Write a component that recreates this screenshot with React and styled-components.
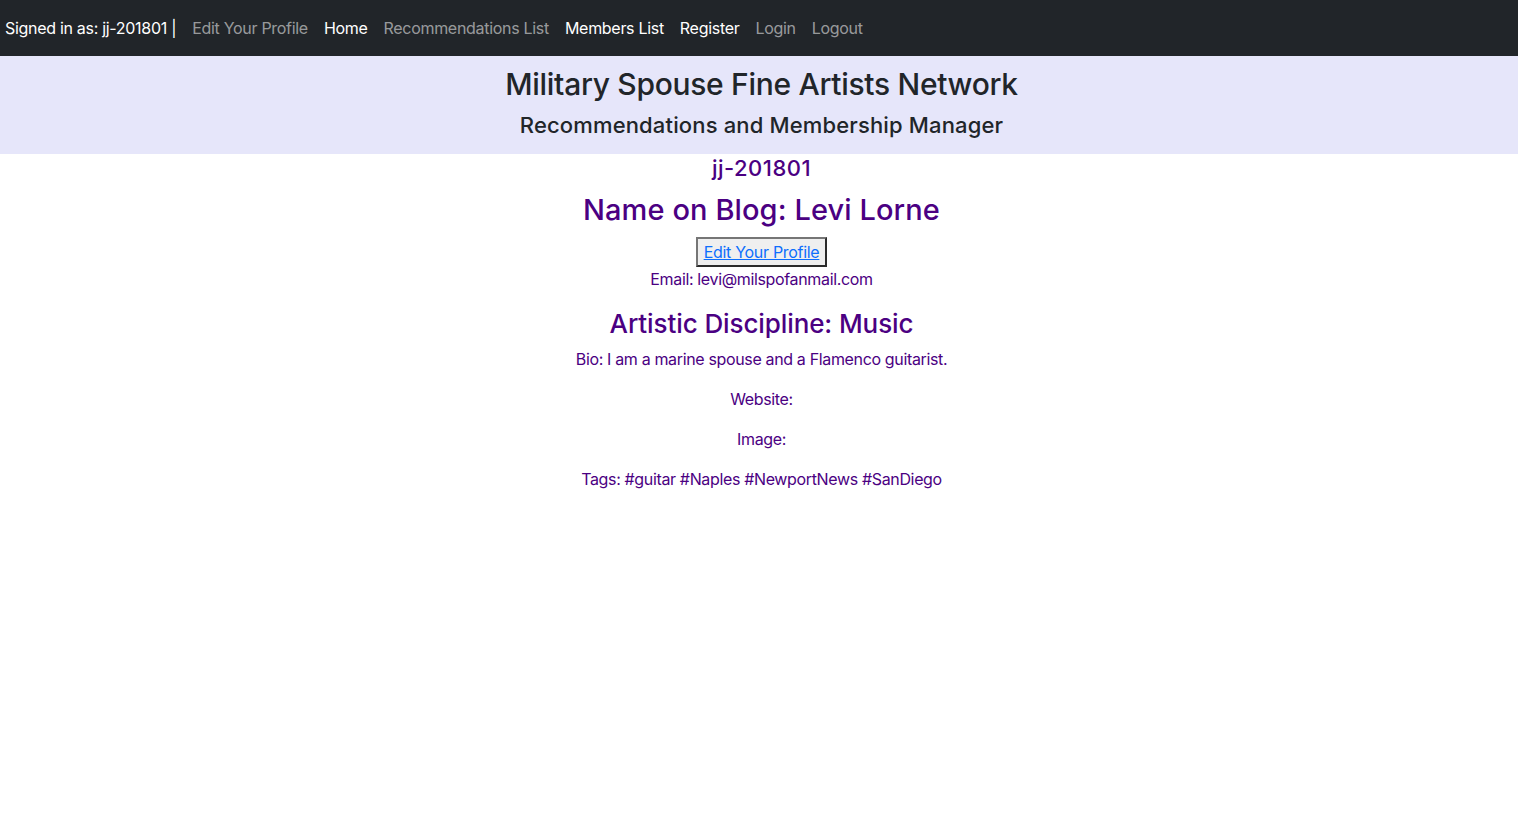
import styled, { createGlobalStyle } from "styled-components"

const Global = createGlobalStyle`
    body {
        margin: 0;
        font-family: Inter, "Noto Sans", sans-serif;
        font-size: 16px;
        line-height: 1.5;
        color: #212529;
        background: #fff;
    }
    * { box-sizing: border-box; }
`

const Nav = styled.nav`
    display: flex;
    align-items: center;
    height: 56px;
    padding: 0 5px;
    background-color: #212529;
    letter-spacing: -0.3px;
`

const SignedIn = styled.span`
    color: #fff;
    margin-right: 8px;
`

const NavLink = styled.a`
    color: ${props => props.$bright ? "#fff" : "rgba(255, 255, 255, 0.55)"};
    text-decoration: none;
    padding: 8px;
    cursor: pointer;
`

const Banner = styled.header`
    background-color: #e6e6fa;
    text-align: center;
    padding: 10px 0 16px 5px;
`

const Title = styled.h1`
    margin: 0;
    font-size: 30px;
    font-weight: 500;
    line-height: 1.2;
    letter-spacing: -0.3px;
`

const Subtitle = styled.h2`
    margin: 10px 0 0;
    font-size: 22px;
    font-weight: 500;
    line-height: 1.2;
    letter-spacing: 0.15px;
`

const Profile = styled.main`
    display: flex;
    flex-direction: column;
    align-items: center;
    text-align: center;
    padding-left: 5px;
    color: #4b0082;
    letter-spacing: -0.35px;
`

const Heading = styled.div`
    font-size: ${props => props.$size}px;
    font-weight: 500;
    line-height: 1.2;
    letter-spacing: ${props => props.$spacing || 0}px;
    margin: ${props => props.$margin};
`

const EditButton = styled.button`
    font: inherit;
    font-size: 16px;
    line-height: 20px;
    letter-spacing: -0.3px;
    padding: 3px 6px;
    background: #efefef;
    border: 2px solid;
    border-color: #767676 #2b2b2b #2b2b2b #767676;
    margin-top: 9px;

    a {
        color: #0d6efd;
        text-decoration: underline;
        cursor: pointer;
    }
`

const Line = styled.p`
    margin: 0 0 ${props => props.$after ?? 16}px;
`

function App() {
    return (
        <>
            <Global />
            <Nav>
                <SignedIn>Signed in as: jj-201801 |</SignedIn>
                <NavLink>Edit Your Profile</NavLink>
                <NavLink $bright>Home</NavLink>
                <NavLink>Recommendations List</NavLink>
                <NavLink $bright>Members List</NavLink>
                <NavLink $bright>Register</NavLink>
                <NavLink>Login</NavLink>
                <NavLink>Logout</NavLink>
            </Nav>
            <Banner>
                <Title>Military Spouse Fine Artists Network</Title>
                <Subtitle>Recommendations and Membership Manager</Subtitle>
            </Banner>
            <Profile>
                <Heading $size={22} $spacing={0.5} $margin="1px 0 0">jj-201801</Heading>
                <Heading $size={29} $spacing={0.1} $margin="11px 0 0">Name on Blog: Levi Lorne</Heading>
                <EditButton><a>Edit Your Profile</a></EditButton>
                <Line $after={0}>Email: levi@milspofanmail.com</Line>
                <Heading $size={26} $spacing={-0.1} $margin="17px 0 8px">Artistic Discipline: Music</Heading>
                <Line>Bio: I am a marine spouse and a Flamenco guitarist.</Line>
                <Line>Website:</Line>
                <Line>Image:</Line>
                <Line>Tags: #guitar #Naples #NewportNews #SanDiego</Line>
            </Profile>
        </>
    )
}

export default App
